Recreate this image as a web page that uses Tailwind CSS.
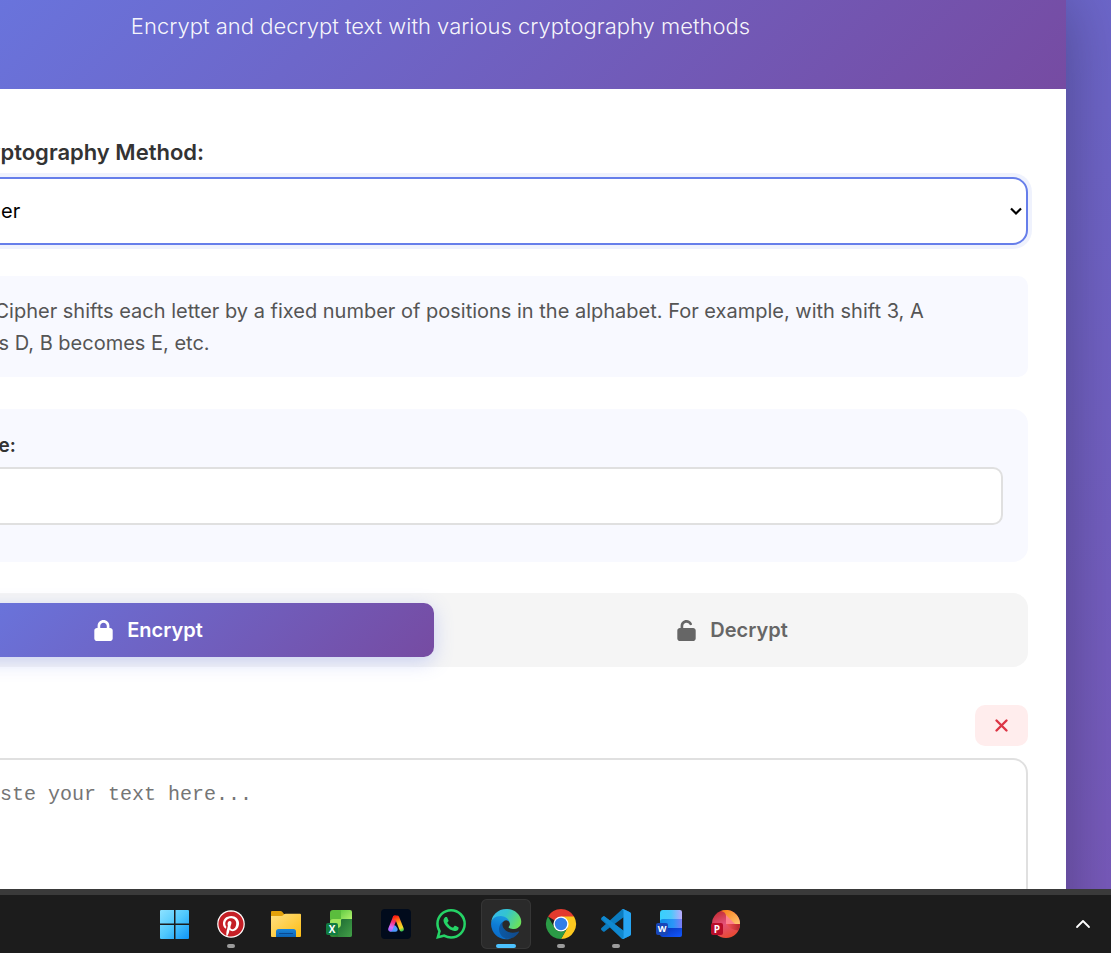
<!DOCTYPE html>
<html lang="en">
<head>
<meta charset="utf-8">
<title>Cryptography Tool</title>
<script src="https://cdn.jsdelivr.net/npm/@tailwindcss/browser@4"></script>
</head>
<body class="flex h-screen flex-col overflow-hidden bg-[#1c1c1c] font-['Inter',sans-serif]">

<!-- Browser page, scrolled right so the card runs past the left edge -->
<main class="min-h-0 flex-1 overflow-hidden bg-[linear-gradient(170deg,#6a69cd,#785abb)]">
  <div class="-ml-[185px] mr-[45px] bg-white shadow-[0_0_64px_rgba(0,0,0,0.3)]">
    <header class="bg-[linear-gradient(135deg,#677ae5,#764ba2)] pt-2 pb-11 text-center">
      <p class="text-[22px] leading-[37px] font-light text-white/95">Encrypt and decrypt text with various cryptography methods</p>
    </header>

    <div class="px-[38px] pt-[45px]">
      <label for="method" class="flex items-center gap-[15px] text-[22px] leading-9 font-semibold text-[#333]">
        <svg class="size-[22px] text-[#667eea]" viewBox="0 0 24 24" fill="none" stroke="currentColor" stroke-width="3" aria-hidden="true"><circle cx="16" cy="8" r="5"/><path d="M12.500 11.500L3 21h5v-3h3"/></svg>
        Select Cryptography Method:
      </label>
      <div class="relative mt-[7px]">
        <select id="method" class="block h-[68px] w-full appearance-none rounded-[15px] border-2 border-[#667eea] bg-white px-[30px] text-[20px] text-black shadow-[0_0_0_4px_rgba(102,126,234,0.1)] outline-none">
          <option>Caesar Cipher</option>
          <option>Vigenère Cipher</option>
        </select>
        <svg class="pointer-events-none absolute inset-y-0 right-[5px] my-auto h-3 w-[14px]" viewBox="0 0 14 12" fill="none" stroke="#000" stroke-width="2.200" aria-hidden="true"><path d="M2 3.500l5 5 5-5"/></svg>
      </div>

      <div class="mt-[31px] flex items-start gap-6 rounded-[10px] border-l-[5px] border-[#667eea] bg-[#f8f9ff] px-5 pt-[19px] pb-[18px] text-[20px] leading-8 text-[#555]">
        <svg class="mt-[6px] size-5 shrink-0 text-[#667eea]" viewBox="0 0 20 20" aria-hidden="true"><circle cx="10" cy="10" r="10" fill="currentColor"/><path d="M10 5v1M10 9v6" stroke="#fff" stroke-width="2"/></svg>
        <p>Caesar Cipher shifts each letter by a fixed number of positions in the alphabet. For example, with shift 3, A becomes D, B becomes E, etc.</p>
      </div>

      <div class="mt-8 rounded-[15px] bg-[#f8f9ff] px-[25px] pt-[22px] pb-[37px]">
        <label for="shift" class="flex items-center gap-[15px] text-[19px] leading-[29px] font-semibold text-[#333]">
          <svg class="size-[18px] text-[#667eea]" viewBox="0 0 18 18" fill="none" stroke="currentColor" stroke-width="2" aria-hidden="true"><path d="M0 4h18M0 9h18M0 14h18M5 2v4M13 7v4M7 12v4"/></svg>
          Shift Value:
        </label>
        <input id="shift" type="text" class="mt-[7px] block h-[58px] w-full rounded-[10px] border-2 border-[#e0e0e0] bg-white px-4 text-[20px] outline-none">
      </div>

      <div class="mt-[31px] flex gap-[13px] rounded-[15px] bg-[#f5f5f5] p-[10px]">
        <button type="button" class="flex h-[54px] flex-1 items-center justify-center gap-[14px] rounded-[10px] bg-[linear-gradient(135deg,#667eea,#764ba2)] text-[20px] font-semibold text-white shadow-[0_5px_19px_rgba(102,126,234,0.3)]">
          <svg class="h-[21px] w-[19px]" viewBox="0 0 448 512" fill="currentColor" aria-hidden="true"><path d="M144 144v48H304V144c0-44.200-35.800-80-80-80s-80 35.800-80 80zM80 192V144C80 64.500 144.500 0 224 0s144 64.500 144 144v48h16c35.300 0 64 28.700 64 64V448c0 35.300-28.700 64-64 64H64c-35.300 0-64-28.700-64-64V256c0-35.300 28.700-64 64-64H80z"/></svg>
          Encrypt
        </button>
        <button type="button" class="flex h-[54px] flex-1 items-center justify-center gap-[14px] rounded-[10px] text-[20px] font-semibold text-[#666]">
          <svg class="h-[21px] w-[19px]" viewBox="0 0 448 512" fill="currentColor" aria-hidden="true"><path d="M144 144c0-44.200 35.800-80 80-80c31.900 0 59.400 18.600 72.300 45.700c7.600 16 26.700 22.800 42.600 15.200s22.800-26.700 15.200-42.600C331 33.700 281.500 0 224 0C144.500 0 80 64.500 80 144v48H64c-35.300 0-64 28.700-64 64V448c0 35.300 28.700 64 64 64H384c35.300 0 64-28.700 64-64V256c0-35.300-28.700-64-64-64H144V144z"/></svg>
          Decrypt
        </button>
      </div>

      <div class="mt-[38px] flex items-center justify-between">
        <label for="input" class="text-[20px] font-semibold text-[#333]">Input Text:</label>
        <button type="button" aria-label="Clear" class="flex h-[41px] w-[53px] items-center justify-center rounded-[10px] bg-[#ffeded] text-[#dc3545]">
          <svg class="size-[15px]" viewBox="0 0 15 15" fill="none" stroke="currentColor" stroke-width="2.400" stroke-linecap="round" aria-hidden="true"><path d="M2.500 2.500l10 10M12.500 2.500l-10 10"/></svg>
        </button>
      </div>
      <textarea id="input" placeholder="Type or paste your text here..." class="mt-3 block h-[250px] w-full resize-none rounded-[15px] border-2 border-[#e0e0e0] bg-white px-[25px] py-[19px] font-['Liberation_Mono',monospace] text-[20px] leading-8 outline-none placeholder:text-[#757575]"></textarea>
    </div>
  </div>
</main>

<!-- Taskbar -->
<footer class="flex shrink-0 items-start justify-between border-t-[6px] border-[#3a3a3a] bg-[#1c1c1c] pt-1 pr-[7px] pb-1 pl-[151px]">
  <nav class="flex gap-[5px]" aria-label="Taskbar">
    <button type="button" aria-label="Start"><svg class="size-[50px]" viewBox="0 0 50 50">
      <defs><linearGradient id="win" gradientUnits="userSpaceOnUse" x1="9" y1="11" x2="38" y2="40"><stop stop-color="#8de2ff"/><stop offset=".5" stop-color="#4fc8fc"/><stop offset="1" stop-color="#0f94f8"/></linearGradient></defs>
      <path fill="url(#win)" d="M10 11h13v13.500H9V12a1 1 0 0 1 1-1zM24.500 11H37a1 1 0 0 1 1 1v12.500H24.500zM9 26h14v14H10a1 1 0 0 1-1-1zM24.500 26H38v13a1 1 0 0 1-1 1H24.500z"/></svg></button>

    <button type="button" aria-label="Pinterest"><svg class="size-[50px]" viewBox="0 0 50 50">
      <circle cx="25" cy="25" r="13.800" fill="#fff"/>
      <path transform="translate(12.400 12.400) scale(1.050)" fill="#c51f26" d="M12.017 0C5.396 0 .029 5.367.029 11.987c0 5.079 3.158 9.417 7.618 11.162-.105-.949-.199-2.403.041-3.439.219-.937 1.406-5.957 1.406-5.957s-.359-.72-.359-1.781c0-1.663.967-2.911 2.168-2.911 1.024 0 1.518.769 1.518 1.688 0 1.029-.653 2.567-.992 3.992-.285 1.193.6 2.165 1.775 2.165 2.128 0 3.768-2.245 3.768-5.487 0-2.861-2.063-4.869-5.008-4.869-3.410 0-5.409 2.562-5.409 5.199 0 1.033.394 2.143.889 2.741.099.12.112.225.085.345-.09.375-.293 1.199-.334 1.363-.053.225-.172.271-.401.165-1.495-.69-2.433-2.878-2.433-4.646 0-3.776 2.748-7.252 7.920-7.252 4.158 0 7.392 2.967 7.392 6.923 0 4.135-2.607 7.462-6.233 7.462-1.214 0-2.354-.629-2.758-1.379l-.749 2.848c-.269 1.045-1.004 2.352-1.498 3.146 1.123.345 2.306.535 3.550.535 6.607 0 11.985-5.365 11.985-11.987C23.970 5.390 18.592.026 11.985.026z"/>
      <rect x="21" y="45" width="8" height="4" rx="2" fill="#9b9b9b"/></svg></button>

    <button type="button" aria-label="File Explorer"><svg class="size-[50px]" viewBox="0 0 50 50">
      <defs><linearGradient id="fold" x2="1" y2="1"><stop stop-color="#ffe082"/><stop offset="1" stop-color="#fdbd14"/></linearGradient><linearGradient id="fb" x2="0" y2="1"><stop stop-color="#1a86dc"/><stop offset="1" stop-color="#0b62b4"/></linearGradient></defs>
      <path fill="#e3a10a" d="M11 12h8.500q1 0 1.700.8L23 15h6v6H10v-8a1 1 0 0 1 1-1z"/>
      <path fill="url(#fold)" d="M10 17h10.500q1 0 1.700-.7l.8-.8q.7-.7 1.600-.7H39a1 1 0 0 1 1 1V37a1 1 0 0 1-1 1H11a1 1 0 0 1-1-1z"/>
      <path fill="url(#fb)" d="M17.500 30h15q2.500 0 2.500 2.500V38H15v-5.500q0-2.500 2.500-2.500z"/><path stroke="#0a4a91" stroke-linecap="round" d="M18.500 34.500h13"/></svg></button>

    <button type="button" aria-label="Excel"><svg class="size-[50px]" viewBox="0 0 50 50">
      <defs><linearGradient id="x1" x2="1" y2="1"><stop stop-color="#53b93f"/><stop offset="1" stop-color="#165b2b"/></linearGradient><linearGradient id="x2" x2="1" y2="1"><stop stop-color="#62cc44"/><stop offset="1" stop-color="#b0f06c"/></linearGradient><linearGradient id="x3" x2="1" y2="1"><stop stop-color="#1d6a33"/><stop offset="1" stop-color="#43a047"/></linearGradient></defs>
      <rect x="14" y="19" width="22" height="19" rx="2" fill="url(#x1)"/>
      <path fill="url(#x3)" d="M25 20h11v16a2 2 0 0 1-2 2H22z"/>
      <path fill="#5bbd3d" d="M17 11h9v9.500H14V14a3 3 0 0 1 3-3z"/><path fill="#9be45b" d="M17 20h8v5q0 4-4 4h-7v-6a3 3 0 0 1 3-3z"/>
      <path fill="url(#x2)" d="M25 11h9a2 2 0 0 1 2 2v7H25z"/>
      <rect x="10" y="24" width="12" height="12" rx="2" fill="#107c41"/><text x="16" y="33.500" text-anchor="middle" font-family="Open Sans" font-weight="700" font-size="10" fill="#fff">X</text></svg></button>

    <button type="button" aria-label="Adobe"><svg class="size-[50px]" viewBox="0 0 50 50">
      <defs><linearGradient id="ad1" gradientUnits="userSpaceOnUse" x1="24" y1="17" x2="19" y2="32"><stop stop-color="#ff2a18"/><stop offset=".4" stop-color="#f42f78"/><stop offset=".75" stop-color="#d86cff"/><stop offset="1" stop-color="#9a69ff"/></linearGradient><linearGradient id="ad2" gradientUnits="userSpaceOnUse" x1="25" y1="17" x2="31" y2="32"><stop stop-color="#ff1c12"/><stop offset=".5" stop-color="#ffb01c"/><stop offset=".8" stop-color="#eddc2a"/><stop offset="1" stop-color="#35c65a"/></linearGradient></defs>
      <rect x="10" y="10" width="30" height="30" rx="4" fill="#010b1c"/>
      <g fill="none" stroke-linecap="round" stroke-linejoin="round" stroke-width="4.400"><path stroke="#4c9bff" d="M20 30.500h4.500l-1.300-2"/><path stroke="url(#ad1)" d="M19.300 30.300L24 18.700"/><path stroke="url(#ad2)" d="M24 18.700h2l4.700 11.600"/></g></svg></button>

    <button type="button" aria-label="WhatsApp"><svg class="size-[50px]" viewBox="0 0 50 50">
      <path transform="translate(10 10) scale(1.250)" fill="#25d366" d="M17.472 14.382c-.297-.149-1.758-.867-2.030-.967-.273-.099-.471-.148-.67.15-.197.297-.767.966-.94 1.164-.173.199-.347.223-.644.075-.297-.15-1.255-.463-2.390-1.475-.883-.788-1.480-1.761-1.653-2.059-.173-.297-.018-.458.13-.606.134-.133.298-.347.446-.52.149-.174.198-.298.298-.497.099-.198.05-.371-.025-.52-.075-.149-.669-1.612-.916-2.207-.242-.579-.487-.5-.669-.51-.173-.008-.371-.01-.57-.01-.198 0-.52.074-.792.372-.272.297-1.040 1.016-1.040 2.479 0 1.462 1.065 2.875 1.213 3.074.149.198 2.096 3.200 5.077 4.487.709.306 1.262.489 1.694.625.712.227 1.360.195 1.871.118.571-.085 1.758-.719 2.006-1.413.248-.694.248-1.289.173-1.413-.074-.124-.272-.198-.57-.347m-5.421 7.403h-.004a9.870 9.870 0 01-5.031-1.378l-.361-.214-3.741.982.998-3.648-.235-.374a9.860 9.860 0 01-1.510-5.260c.001-5.450 4.436-9.884 9.888-9.884 2.640 0 5.122 1.030 6.988 2.898a9.825 9.825 0 012.893 6.994c-.003 5.450-4.437 9.884-9.885 9.884m8.413-18.297A11.815 11.815 0 0012.050 0C5.495 0 .16 5.335.157 11.892c0 2.096.547 4.142 1.588 5.945L.057 24l6.305-1.654a11.882 11.882 0 005.683 1.448h.005c6.554 0 11.890-5.335 11.893-11.893a11.821 11.821 0 00-3.480-8.413z"/></svg></button>

    <button type="button" aria-label="Edge" class="rounded-md bg-[#2a2a2a] ring-1 ring-[#363636] ring-inset"><svg class="size-[50px]" viewBox="0 0 50 50">
      <defs><linearGradient id="e1" x1=".1" y1=".5" x2="1" y2=".6"><stop stop-color="#0c59a4"/><stop offset="1" stop-color="#114a8b"/></linearGradient><linearGradient id="e2" x1=".6" y1="0" x2=".3" y2="1"><stop stop-color="#1b9de2"/><stop offset=".5" stop-color="#0e7bd4"/><stop offset="1" stop-color="#0a6bc9"/></linearGradient><linearGradient id="e3" x1="0" y1=".2" x2="1" y2=".6"><stop stop-color="#35b8ee"/><stop offset=".45" stop-color="#34c4cf"/><stop offset="1" stop-color="#6be15a"/></linearGradient></defs>
      <g transform="translate(9.500 9.400) scale(.118)"><path fill="url(#e1)" d="M235.680 195.460a93.730 93.730 0 0 1-10.540 4.710 101.870 101.870 0 0 1-35.900 6.460c-47.320 0-88.540-32.550-88.540-74.320A31.480 31.480 0 0 1 117.130 105c-42.800 1.800-53.800 46.400-53.800 72.530 0 73.880 68.090 81.370 82.760 81.370 7.910 0 19.840-2.300 27-4.560l1.310-.44a128.340 128.340 0 0 0 66.600-52.800 4 4 0 0 0-5.320-5.640Z"/><path fill="url(#e2)" d="M110.340 246.340A79.200 79.200 0 0 1 87.600 225a80.720 80.720 0 0 1 29.530-120c3.120-1.470 8.450-4.130 15.540-4a32.350 32.350 0 0 1 25.690 13 31.880 31.880 0 0 1 6.360 18.660c0-.21 24.460-79.600-80-79.600-43.900 0-80 41.660-80 78.210a130.150 130.150 0 0 0 12.110 56 128 128 0 0 0 156.380 67.110 75.550 75.550 0 0 1-62.780-8Z"/><path fill="url(#e3)" d="M156.940 153.780c-.81 1.050-3.300 2.500-3.300 5.660 0 2.610 1.700 5.120 4.720 7.230 14.380 10 41.490 8.680 41.560 8.680a59.560 59.560 0 0 0 30.270-8.350A61.380 61.380 0 0 0 260.620 114c.26-22.410-8-37.310-11.340-43.910C228.090 28.760 182.350 5 132.620 5a128 128 0 0 0-128 126.200c.48-36.540 36.800-66.050 80-66.050 3.500 0 23.460.34 42 10.070 16.340 8.580 24.900 18.940 30.850 29.210 6.180 10.670 7.280 24.150 7.280 29.520s-2.740 13.330-7.810 19.830Z"/></g>
      <rect x="15" y="45" width="20" height="4" rx="2" fill="#4cc2ff"/></svg></button>

    <button type="button" aria-label="Chrome"><svg class="size-[50px]" viewBox="0 0 50 50">
      <path fill="#e33b2e" d="M25 25L12 17.500a15 15 0 0 1 26 0z"/>
      <path fill="#fcc81f" d="M25 17.500h13A15 15 0 0 1 25 40l6.500-11.300z"/>
      <path fill="#2b9b46" d="M12 17.500l6.500 11.300q2 3.700 6.500 3.700 3.500 0 5.500-2L25 40a15 15 0 0 1-13-22.500z"/>
      <circle cx="25" cy="25" r="7.600" fill="#fff"/><circle cx="25" cy="25" r="6.200" fill="#2f7de9"/>
      <rect x="21" y="45" width="8" height="4" rx="2" fill="#9b9b9b"/></svg></button>

    <button type="button" aria-label="Visual Studio Code"><svg class="size-[50px]" viewBox="0 0 50 50">
      <g transform="translate(10 10) scale(1.250)"><path fill="#0b7cc0" d="M23.150 2.587L18.210.21a1.494 1.494 0 0 0-1.705.29l-9.460 8.630-4.120-3.128a.999.999 0 0 0-1.276.057L.327 7.261A1 1 0 0 0 .326 8.740L3.899 12 .326 15.260a1 1 0 0 0 .001 1.479L1.650 17.940a.999.999 0 0 0 1.276.057l4.120-3.128 9.460 8.630a1.492 1.492 0 0 0 1.704.29l4.942-2.377A1.500 1.500 0 0 0 24 20.060V3.939a1.500 1.500 0 0 0-.85-1.352zm-5.146 14.861L10.826 12l7.178-5.448v10.896z"/>
      <path fill="#1089d0" d="M.327 7.261L1.650 6.060a1 1 0 0 1 1.276-.057L18 17.450v5.900l-1.500.15z"/>
      <path fill="#27a5f2" d="M18.210.21l4.940 2.377A1.500 1.500 0 0 1 24 3.940v16.120a1.500 1.500 0 0 1-.85 1.352l-4.940 2.377a1.500 1.500 0 0 1-1.700-.29q1.490.6 1.490-1V1.500q0-1.600-1.490-1a1.500 1.500 0 0 1 1.700-.29z"/></g>
      <rect x="21" y="45" width="8" height="4" rx="2" fill="#9b9b9b"/></svg></button>

    <button type="button" aria-label="Word"><svg class="size-[50px]" viewBox="0 0 50 50">
      <defs><linearGradient id="w1" x2="1"><stop stop-color="#38d0fd"/><stop offset=".5" stop-color="#4bc9fb"/><stop offset="1" stop-color="#bbaafc"/></linearGradient><linearGradient id="w2" x2="1"><stop stop-color="#0c8ce6"/><stop offset=".6" stop-color="#2a96f8"/><stop offset="1" stop-color="#7c7cf6"/></linearGradient><linearGradient id="w3" x2="1" y2="1"><stop stop-color="#0531b0"/><stop offset="1" stop-color="#1358ff"/></linearGradient></defs>
      <path fill="url(#w3)" d="M14 28h22v8a2 2 0 0 1-2 2H17a3 3 0 0 1-3-3z"/><path fill="url(#w2)" d="M14 19h22v10H17q-3 0-3 3z"/><path fill="url(#w1)" d="M17 11h17a2 2 0 0 1 2 2v7H17q-3 0-3 3v-9a3 3 0 0 1 3-3z"/>
      <rect x="10" y="24" width="12" height="12" rx="2" fill="#1846b8"/><text x="16" y="33.300" text-anchor="middle" font-family="Open Sans" font-weight="700" font-size="9" fill="#fff">W</text></svg></button>

    <button type="button" aria-label="PowerPoint"><svg class="size-[50px]" viewBox="0 0 50 50">
      <defs><linearGradient id="p1" x1=".2" y1="0" x2=".6" y2="1"><stop stop-color="#bf2a2c"/><stop offset=".5" stop-color="#e4517a"/><stop offset="1" stop-color="#e8492f"/></linearGradient><linearGradient id="p2" x2="1" y2="1"><stop stop-color="#f87b14"/><stop offset="1" stop-color="#ffc574"/></linearGradient><linearGradient id="p3" x2="1" y2="0"><stop stop-color="#f6585a"/><stop offset="1" stop-color="#b8252b"/></linearGradient></defs>
      <circle cx="25" cy="25" r="14" fill="url(#p1)"/>
      <path fill="url(#p2)" d="M20 11.900A14 14 0 0 1 39 25H27l-2-2v-6q0-4-5-5.100z"/><path fill="#ff7f8d" d="M25 16l9 9h-9z"/>
      <path fill="url(#p3)" d="M25 25h14a14 14 0 0 1-1.700 6.500Q30 31 25 25z"/>
      <rect x="10" y="24" width="12" height="12" rx="2" fill="#b80d29"/><text x="16" y="33.500" text-anchor="middle" font-family="Open Sans" font-weight="700" font-size="10" fill="#fff">P</text></svg></button>
  </nav>
  <button type="button" aria-label="Show hidden icons" class="flex h-[50px] w-[42px] items-center justify-center"><svg class="size-5" viewBox="0 0 20 20" fill="none" stroke="#fff" stroke-width="1.800" stroke-linecap="round" stroke-linejoin="round"><path d="M4 13l6-6 6 6"/></svg></button>
</footer>
</body>
</html>
